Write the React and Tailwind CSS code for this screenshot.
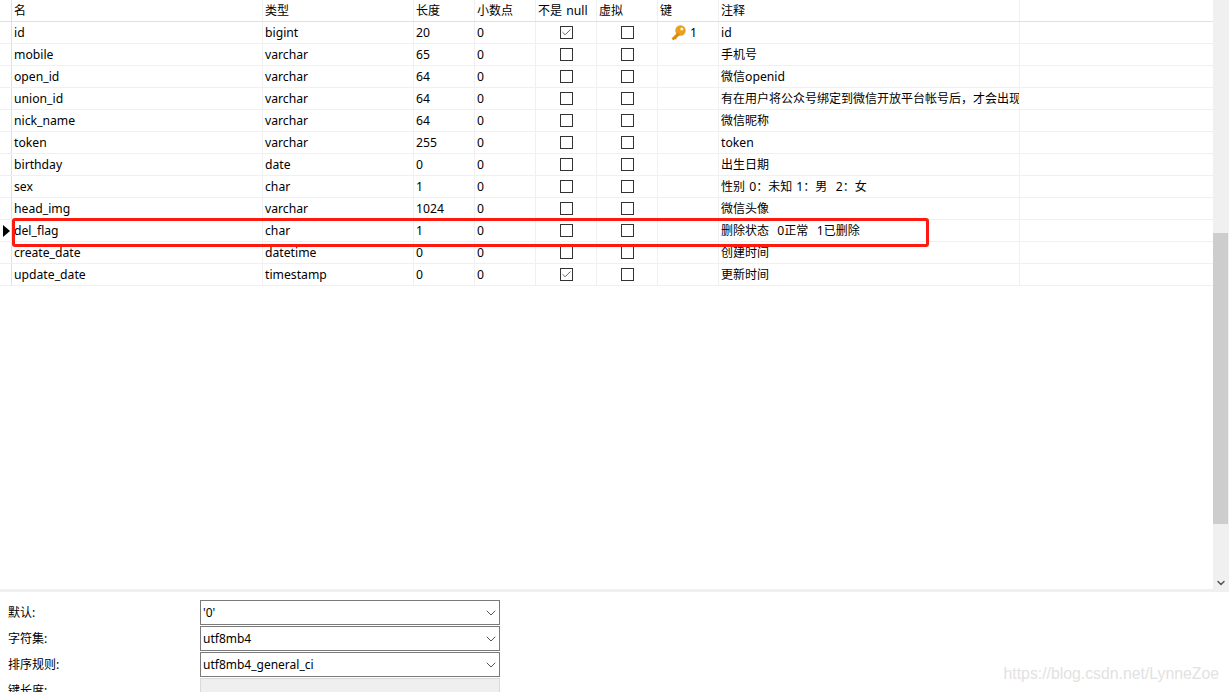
import { Check, ChevronDown } from "lucide-react";

const font = "font-['Noto_Sans','Noto_Sans_CJK_SC',sans-serif]";

const columns = [
	{ label: "名", width: "w-[251px]" },
	{ label: "类型", width: "w-[151px]" },
	{ label: "长度", width: "w-[61px]" },
	{ label: "小数点", width: "w-[61px]" },
	{ label: "不是 null", width: "w-[61px]" },
	{ label: "虚拟", width: "w-[61px]" },
	{ label: "键", width: "w-[61px]" },
	{ label: "注释", width: "w-[301px]" },
];

const rows = [
	["id", "bigint", "20", "0", true, "id", true],
	["mobile", "varchar", "65", "0", false, "手机号"],
	["open_id", "varchar", "64", "0", false, "微信openid"],
	["union_id", "varchar", "64", "0", false, "有在用户将公众号绑定到微信开放平台帐号后，才会出现该字段"],
	["nick_name", "varchar", "64", "0", false, "微信昵称"],
	["token", "varchar", "255", "0", false, "token"],
	["birthday", "date", "0", "0", false, "出生日期"],
	["sex", "char", "1", "0", false, "性别 0：未知 1：男  2：女"],
	["head_img", "varchar", "1024", "0", false, "微信头像"],
	["del_flag", "char", "1", "0", false, "删除状态  0正常  1已删除"],
	["create_date", "datetime", "0", "0", false, "创建时间"],
	["update_date", "timestamp", "0", "0", true, "更新时间"],
];

// chinese runs sit at 12px, latin is a bit bigger in the original grid
function Mixed({ text }) {
	const parts = text.split(/([\u3000-\u9fff\uff00-\uffef]+)/).filter(Boolean);
	return (
		<span className="whitespace-pre [word-spacing:1px]">
			{parts.map((p, i) =>
				/[\u3000-\u9fff\uff00-\uffef]/.test(p) ? (
					<span key={i} className="text-[12px]">{p}</span>
				) : (
					<span key={i}>{p}</span>
				)
			)}
		</span>
	);
}

function Box({ checked }) {
	return (
		<div className="w-[13px] h-[13px] border border-[#333333] flex items-center justify-center bg-white">
			{checked && <Check size={11} strokeWidth={2} className="text-[#555555]" />}
		</div>
	);
}

function KeyIcon() {
	return (
		<svg width="15" height="16" viewBox="0 0 15 16">
			<circle cx="9.5" cy="5.5" r="5.2" fill="#e8a020" />
			<circle cx="10.8" cy="4" r="1.5" fill="#fff3d0" />
			<path d="M6.5 7.5 L0.5 13.5 L2.5 15.5 L4 14 L5 14.5 L6 12.5 L9 10 Z" fill="#d98c10" />
		</svg>
	);
}

function Cell({ width, className = "", children }) {
	return (
		<div className={`${width} shrink-0 h-full border-r border-[#f0f0f0] px-[2px] flex items-center overflow-hidden whitespace-nowrap ${className}`}>
			{children}
		</div>
	);
}

function Select({ value, disabled }) {
	if (disabled) {
		return <div className="h-[25px] w-[300px] border border-[#d9d9d9] bg-[#efefef]" />;
	}
	return (
		<div className="h-[25px] w-[300px] border border-[#7a7a7a] bg-white flex items-center justify-between pl-[2px] text-[12px]">
			<span>{value}</span>
			<ChevronDown size={16} strokeWidth={1.25} className="text-[#333333]" />
		</div>
	);
}

export default function App() {
	return (
		<div className={`${font} w-[1229px] h-[692px] overflow-hidden bg-white flex flex-col text-[12.2px] text-black relative`}>
			<div className="h-[589px] shrink-0 flex">
				<div className="w-[1213px]">
					<div className="flex h-[22px] border-b border-[#e0e0e0]">
						<div className="w-[12px] shrink-0 border-r border-[#e0e0e0]" />
						{columns.map((c) => (
							<Cell key={c.label} width={c.width} className="pt-[2px]"><Mixed text={c.label} /></Cell>
						))}
					</div>
					{rows.map((r) => (
						<div key={r[0]} className="flex h-[22px] border-b border-[#f0f0f0]">
							<div className="w-[12px] shrink-0 border-r border-[#e0e0e0] flex items-center">
								{r[0] === "del_flag" && (
									<div className="ml-[3px] border-y-[6px] border-l-[7px] border-y-transparent border-l-black" />
								)}
							</div>
							<Cell width="w-[251px]" className="pt-[2px]">{r[0]}</Cell>
							<Cell width="w-[151px]" className="pt-[2px]">{r[1]}</Cell>
							<Cell width="w-[61px]" className="pt-[2px]">{r[2]}</Cell>
							<Cell width="w-[61px]" className="pt-[2px]">{r[3]}</Cell>
							<Cell width="w-[61px]" className="justify-center"><Box checked={r[4]} /></Cell>
							<Cell width="w-[61px]" className="justify-center"><Box /></Cell>
							<Cell width="w-[61px]" className="pl-[13px] gap-[4px]">
								{r[6] && <><KeyIcon /><span className="pt-[1px]">1</span></>}
							</Cell>
							<Cell width="w-[301px]" className="pt-[2px]"><Mixed text={r[5]} /></Cell>
						</div>
					))}
				</div>
				<div className="w-[16px] bg-[#f0f0f0] flex flex-col">
					<div className="h-[233px]" />
					<div className="h-[291px] w-[15px] bg-[#cdcdcd]" />
					<div className="flex-1 flex items-end justify-center">
						<ChevronDown size={12} strokeWidth={3} className="text-[#555555]" />
					</div>
				</div>
			</div>
			<div className="h-[3px] shrink-0 bg-[#f0f0f0]" />
			<div className="flex flex-col gap-px pt-[8px]">
				{[["默认:", "'0'"], ["字符集:", "utf8mb4"], ["排序规则:", "utf8mb4_general_ci"], ["键长度:", ""]].map(([label, value], i) => (
					<div key={label} className="flex items-center pl-[8px]">
						<div className="w-[192px] pt-[2px]"><Mixed text={label} /></div>
						<Select value={value} disabled={i === 3} />
					</div>
				))}
			</div>
			<div className="absolute left-[12px] top-[218px] w-[917px] h-[29px] border-[3px] border-[#ff1a10] rounded-[3px]" />
			<div className="absolute right-[10px] top-[662px] text-[15.8px] text-[#e2e2e2] font-['Liberation_Sans',sans-serif]">
				https://blog.csdn.net/LynneZoe
			</div>
		</div>
	);
}
